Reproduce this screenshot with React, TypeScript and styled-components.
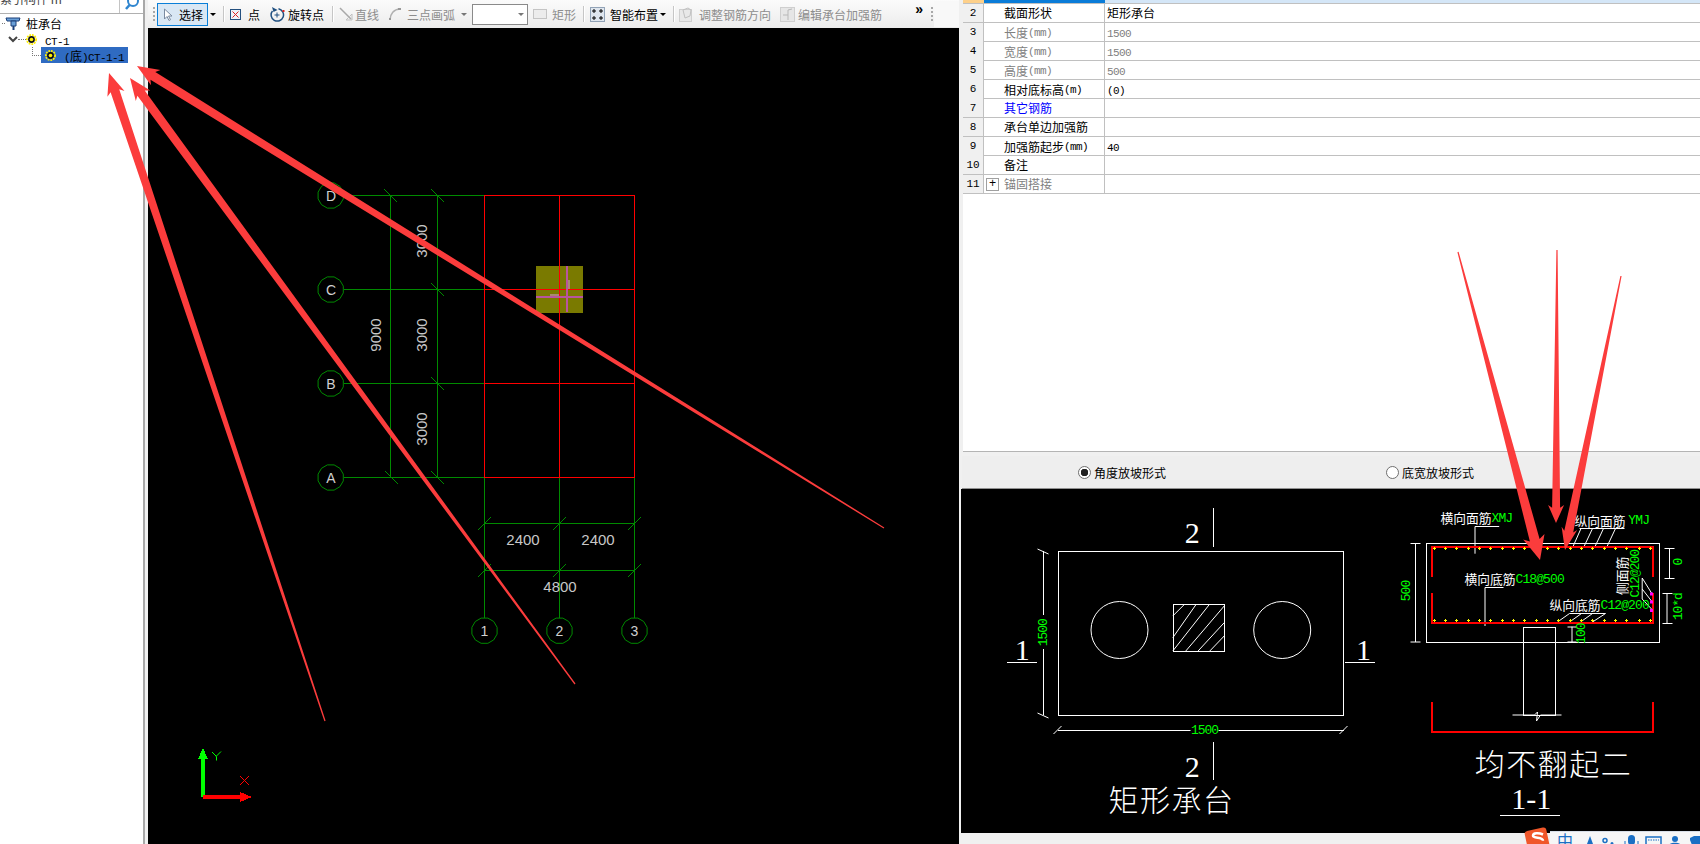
import React from "react";
import styled, { createGlobalStyle } from "styled-components";

const CJK = `"Noto Sans CJK SC", "Liberation Sans", sans-serif`;
const MONO = `"Liberation Mono", "Noto Sans CJK SC", monospace`;
const SERIF = `"Liberation Serif", "Noto Sans CJK SC", serif`;

const Global = createGlobalStyle`
  html, body { margin: 0; padding: 0; background: #f0f0f0; }
  body { font-family: ${CJK}; font-size: 12px; color: #000; }
`;

const Page = styled.div`
  position: relative;
  display: flex;
  width: 1700px;
  height: 844px;
  overflow: hidden;
  background: #f0f0f0;
`;

/* ---------- left tree ---------- */
const TreePanel = styled.aside`
  width: 143px;
  flex: none;
  background: #fff;
  border-right: 2px solid #a8a8a8;
  display: flex;
  flex-direction: column;
`;
const SearchBar = styled.div`
  height: 13px;
  flex: none;
  display: flex;
  border-bottom: 1px solid #b0b0b0;
`;
const SearchField = styled.div`
  width: 119px;
  height: 13px;
  border-right: 1px solid #c4c4c4;
  display: flex;
  align-items: flex-end;
  overflow: hidden;
`;
const SearchText = styled.span`
  line-height: 16px;
  margin-bottom: 6px;
  color: #444;
  white-space: nowrap;
`;
const SearchIcon = styled.div`
  flex: 1;
  display: flex;
  justify-content: center;
  overflow: hidden;
`;
const Tree = styled.div`
  padding-top: 1px;
`;
const TreeRow = styled.div<{ $indent: number }>`
  height: 16px;
  display: flex;
  align-items: center;
  padding-left: ${(p) => p.$indent}px;
  white-space: nowrap;
`;
const Dots = styled.span<{ $w: number }>`
  width: ${(p) => p.$w}px;
  height: 0;
  border-top: 1px dotted #777;
  flex: none;
`;
const Elbow = styled.span`
  width: 8px;
  height: 8px;
  margin-top: -8px;
  border-left: 1px dotted #777;
  border-bottom: 1px dotted #777;
  flex: none;
`;
const Selected = styled.div`
  width: 87px;
  height: 16px;
  padding-left: 4px;
  box-sizing: border-box;
  background: #2f6bc2;
  display: flex;
  align-items: center;
  color: #000;
`;
const NodeLabel = styled.span<{ $ml: number }>`
  margin-left: ${(p) => p.$ml}px;
`;
const Latin = styled.span`
  font-family: ${MONO};
  font-size: 11px;
  letter-spacing: -0.6px;
`;

/* ---------- centre ---------- */
const CenterPane = styled.main`
  width: 811px;
  margin-left: 3px;
  flex: none;
  display: flex;
  flex-direction: column;
`;
const Toolbar = styled.div`
  height: 28px;
  flex: none;
  display: flex;
  align-items: center;
  background: linear-gradient(#fbfbfb, #ececec);
  white-space: nowrap;
`;
const Grip = styled.span<{ $ml: number }>`
  width: 2px;
  height: 14px;
  margin-left: ${(p) => p.$ml}px;
  flex: none;
  background: repeating-linear-gradient(#a8a8a8 0 2px, transparent 2px 4px);
`;
const ActiveTool = styled.div`
  width: 51px;
  height: 23px;
  box-sizing: border-box;
  margin-left: 2px;
  padding-left: 5px;
  border: 1px solid #0a7fd8;
  background: #d9e7f4;
  display: flex;
  align-items: center;
  gap: 6px;
  flex: none;
`;
const Tool = styled.div<{ $ml: number; $off?: boolean; $gap?: number }>`
  margin-left: ${(p) => p.$ml}px;
  display: flex;
  align-items: center;
  gap: ${(p) => p.$gap ?? 4}px;
  color: ${(p) => (p.$off ? "#8d8d8d" : "#000")};
  flex: none;
`;
const Sep = styled.span<{ $ml: number }>`
  width: 1px;
  height: 16px;
  margin-left: ${(p) => p.$ml}px;
  background: #c6c6c6;
  box-shadow: 1px 0 0 #fff;
  flex: none;
`;
const Caret = styled.span<{ $ml: number; $off?: boolean }>`
  margin-left: ${(p) => p.$ml}px;
  width: 0;
  height: 0;
  border: 3px solid transparent;
  border-top: 3px solid ${(p) => (p.$off ? "#777" : "#000")};
  border-bottom: 0;
  flex: none;
`;
const Combo = styled.div`
  width: 56px;
  height: 21px;
  box-sizing: border-box;
  margin-left: 5px;
  border: 1px solid #8a8a8a;
  background: #fff;
  display: flex;
  align-items: center;
  justify-content: flex-end;
  padding-right: 3px;
  flex: none;
`;
const Chevrons = styled.span`
  width: 8px;
  margin-left: 33px;
  margin-top: -10px;
  font: bold 14px/14px "Liberation Sans", sans-serif;
  flex: none;
`;
const ToolEnd = styled.span`
  margin-left: auto;
  width: 25px;
  height: 26px;
  background: #f8f8f8;
  flex: none;
`;
const Canvas = styled.div`
  flex: 1;
  background: #000;
  overflow: hidden;
`;
const CadSvg = styled.svg`
  display: block;
  width: 100%;
  height: 100%;
`;

/* ---------- right ---------- */
const RightPane = styled.section`
  flex: 1;
  margin-left: 3px;
  display: flex;
  flex-direction: column;
  min-width: 0;
`;
const TableArea = styled.div`
  height: 451px;
  flex: none;
  background: #fff;
  margin-left: 1px;
  border-bottom: 1px solid #b4b4b4;
  box-sizing: content-box;
`;
const HeadRow = styled.div`
  height: 3px;
  display: grid;
  grid-template-columns: 21px 121px 1fr;
  border-bottom: 1px solid #c0c0c0;
`;
const HeadCell = styled.div<{ $bg: string }>`
  background: ${(p) => p.$bg};
`;
const Row = styled.div`
  height: 18px;
  display: grid;
  grid-template-columns: 21px 121px 1fr;
  border-bottom: 1px solid #c0c0c0;
  line-height: 18px;
`;
const NumCell = styled.div`
  background: #f0f0f0;
  border-right: 1px solid #c0c0c0;
  font: 11px/18px ${MONO};
  text-align: center;
`;
const NameCell = styled.div<{ $tone: "normal" | "off" | "link" }>`
  display: flex;
  align-items: center;
  padding-left: 20px;
  border-right: 1px solid #c0c0c0;
  color: ${(p) =>
    p.$tone === "off" ? "#808080" : p.$tone === "link" ? "#0000ff" : "#000"};
  position: relative;
  white-space: nowrap;
`;
const ValueCell = styled.div<{ $off?: boolean }>`
  padding-left: 2px;
  color: ${(p) => (p.$off ? "#808080" : "#000")};
`;
const PlusBox = styled.span`
  position: absolute;
  left: 2px;
  top: 3px;
  width: 11px;
  height: 11px;
  border: 1px solid #a0a0a0;
  font: 12px/10px ${MONO};
  text-align: center;
  color: #000;
`;
const OptionsBar = styled.div`
  height: 32px;
  margin-top: 4px;
  flex: none;
  background: #eeeeee;
  border-bottom: 1px solid #909090;
  display: flex;
  align-items: center;
`;
const RadioItem = styled.label<{ $ml: number }>`
  margin-left: ${(p) => p.$ml}px;
  display: flex;
  align-items: center;
  gap: 3px;
  white-space: nowrap;
`;
const RadioDot = styled.span<{ $on?: boolean }>`
  width: 11px;
  height: 11px;
  border-radius: 50%;
  border: 1px solid #707070;
  background: radial-gradient(circle, ${(p) => (p.$on ? "#222 0 3.5px" : "#fff 0 3.5px")}, #fff 4px);
`;
const DrawingArea = styled.div`
  height: 344px;
  flex: none;
  background: #000;
  margin-left: -1px;
  overflow: hidden;
`;
const StatusStrip = styled.div`
  flex: 1;
  background: #f0f0f0;
`;

/* ---------- overlays ---------- */
const ArrowLayer = styled.svg`
  position: absolute;
  left: 0;
  top: 0;
  width: 1700px;
  height: 844px;
  pointer-events: none;
`;
const ImeBar = styled.svg`
  position: absolute;
  right: 0;
  bottom: 0;
  width: 176px;
  height: 17px;
`;

/* ---------- CAD texts ---------- */
const GridMark = styled.text`
  font: 14px "Liberation Sans", sans-serif;
  fill: #d0d0d0;
  text-anchor: middle;
  dominant-baseline: central;
`;
const DimText = styled.text`
  font: 15px "Liberation Sans", sans-serif;
  fill: #c8c8c8;
  text-anchor: middle;
  dominant-baseline: central;
`;
const GreenDim = styled.text`
  font: 13px ${MONO};
  letter-spacing: -1px;
  fill: #00ff00;
  text-anchor: middle;
  dominant-baseline: central;
`;
const SerifMark = styled.text`
  font: 30px ${SERIF};
  fill: #fff;
  text-anchor: middle;
  dominant-baseline: central;
`;
const TitleText = styled.text`
  font: 300 30px ${CJK};
  letter-spacing: 1.5px;
  fill: #fff;
  text-anchor: middle;
  dominant-baseline: central;
`;
const RebarLabel = styled.text`
  font: 12.75px ${CJK};
  fill: #fff;
  dominant-baseline: central;
`;
const RebarCode = styled.tspan`
  font: 13px ${MONO};
  letter-spacing: -0.9px;
  fill: #00ff00;
`;

/* ---------- drawing helpers ---------- */
const ngon = (cx: number, cy: number, r: number, n = 12) =>
  Array.from({ length: n }, (_, i) => {
    const a = (i / n) * Math.PI * 2 + Math.PI / n;
    return `${(cx + r * Math.cos(a)).toFixed(1)},${(cy + r * Math.sin(a)).toFixed(1)}`;
  }).join(" ");

type Pt = [number, number];
const arrow = (tail: Pt, tip: Pt, w: number, hw: number, hl: number) => {
  const dx = tip[0] - tail[0];
  const dy = tip[1] - tail[1];
  const len = Math.hypot(dx, dy);
  const ux = dx / len;
  const uy = dy / len;
  const nx = -uy;
  const ny = ux;
  const at = (back: number, side: number): string =>
    `${(tip[0] - ux * back + nx * side).toFixed(1)},${(tip[1] - uy * back + ny * side).toFixed(1)}`;
  return [
    at(len, -0.6),
    at(len, 0.6),
    at(hl * 0.85, w / 2),
    at(hl, hw),
    at(0, 0),
    at(hl, -hw),
    at(hl * 0.85, -w / 2),
  ].join(" ");
};

const ARROWS: { tail: Pt; tip: Pt; w: number; hw: number; hl: number }[] = [
  { tail: [325, 721], tip: [109, 73], w: 9, hw: 9, hl: 22 },
  { tail: [575, 684], tip: [130, 78], w: 9, hw: 9, hl: 22 },
  { tail: [884, 528], tip: [137, 66], w: 9, hw: 9, hl: 22 },
  { tail: [1458, 252], tip: [1540, 560], w: 10, hw: 11, hl: 24 },
  { tail: [1557, 250], tip: [1556, 523], w: 8, hw: 8, hl: 18 },
  { tail: [1621, 276], tip: [1565, 550], w: 9, hw: 8, hl: 22 },
];

const GREEN = "#008a00";
const RED = "#ff0000";

const Gear = () => (
  <svg width="11" height="11" viewBox="0 0 11 11">
    <circle cx="5.5" cy="5.5" r="4.6" fill="none" stroke="#ffee00" strokeWidth="1.8" strokeDasharray="1.8 .9" />
    <circle cx="5.5" cy="5.5" r="3.4" fill="#111" />
    <circle cx="5.5" cy="5.5" r="1.8" fill="#ffee00" />
  </svg>
);

const rows: {
  n: number;
  name: string;
  unit?: string;
  value?: string;
  tone?: "normal" | "off" | "link";
  mono?: boolean;
  plus?: boolean;
}[] = [
  { n: 2, name: "截面形状", value: "矩形承台" },
  { n: 3, name: "长度", unit: "(mm)", value: "1500", tone: "off", mono: true },
  { n: 4, name: "宽度", unit: "(mm)", value: "1500", tone: "off", mono: true },
  { n: 5, name: "高度", unit: "(mm)", value: "500", tone: "off", mono: true },
  { n: 6, name: "相对底标高", unit: "(m)", value: "(0)", mono: true },
  { n: 7, name: "其它钢筋", tone: "link" },
  { n: 8, name: "承台单边加强筋" },
  { n: 9, name: "加强筋起步", unit: "(mm)", value: "40", mono: true },
  { n: 10, name: "备注" },
  { n: 11, name: "锚固搭接", tone: "off", plus: true },
];

const gridRows = [
  { y: 195.5, label: "D" },
  { y: 289.5, label: "C" },
  { y: 383.5, label: "B" },
  { y: 477.5, label: "A" },
];
const gridCols = [
  { x: 484.5, label: "1" },
  { x: 559.5, label: "2" },
  { x: 634.5, label: "3" },
];

const MainDrawing = () => (
  <CadSvg viewBox="148 28 811 816">
    <g shapeRendering="crispEdges" fill="none" strokeWidth="1">
      {gridRows.map((r) => (
        <React.Fragment key={r.label}>
          <line x1="344" y1={r.y} x2="484" y2={r.y} stroke={GREEN} />
          <line x1="484" y1={r.y} x2="635" y2={r.y} stroke={RED} />
        </React.Fragment>
      ))}
      <line x1="390.5" y1="195" x2="390.5" y2="478" stroke={GREEN} />
      <line x1="437.5" y1="195" x2="437.5" y2="478" stroke={GREEN} />
      {gridCols.map((c) => (
        <React.Fragment key={c.label}>
          <line x1={c.x} y1="195" x2={c.x} y2="478" stroke={RED} />
          <line x1={c.x} y1="478" x2={c.x} y2="618" stroke={GREEN} />
        </React.Fragment>
      ))}
      <line x1="484" y1="523.5" x2="635" y2="523.5" stroke={GREEN} />
      <line x1="484" y1="570.5" x2="635" y2="570.5" stroke={GREEN} />
    </g>
    <g stroke={GREEN} strokeWidth="1" fill="none">
      {[195.5, 289.5, 383.5, 477.5].map((y) => (
        <line key={`t${y}`} x1="431" y1={y - 6.5} x2="444" y2={y + 6.5} />
      ))}
      <line x1="384" y1="189" x2="397" y2="202" />
      <line x1="385" y1="471" x2="398" y2="484" />
      {[484.5, 559.5, 634.5].map((x) => (
        <React.Fragment key={`u${x}`}>
          <line x1={x - 6.5} y1="530" x2={x + 6.5} y2="517" />
          <line x1={x - 6.5} y1="577" x2={x + 6.5} y2="564" />
        </React.Fragment>
      ))}
      {gridRows.map((r) => (
        <polygon key={r.label} points={ngon(330.7, r.y, 13)} />
      ))}
      {gridCols.map((c) => (
        <polygon key={c.label} points={ngon(c.x, 630.7, 13)} />
      ))}
    </g>
    {gridRows.map((r) => (
      <GridMark key={r.label} x="331" y={r.y}>{r.label}</GridMark>
    ))}
    {gridCols.map((c) => (
      <GridMark key={c.label} x={c.x} y="631">{c.label}</GridMark>
    ))}
    {[241, 335, 429].map((y) => (
      <DimText key={y} x="421.5" y={y} transform={`rotate(-90 421.5 ${y})`}>3000</DimText>
    ))}
    <DimText x="375" y="335" transform="rotate(-90 375 335)">9000</DimText>
    <DimText x="523" y="539">2400</DimText>
    <DimText x="598" y="539">2400</DimText>
    <DimText x="560" y="586">4800</DimText>

    <rect x="536" y="266" width="47" height="47" fill="#7a7a00" />
    <line x1="536" y1="289.5" x2="583" y2="289.5" stroke={RED} shapeRendering="crispEdges" />
    <line x1="559.5" y1="266" x2="559.5" y2="313" stroke={RED} shapeRendering="crispEdges" />
    <rect x="566" y="266" width="2" height="46" fill="#b8559f" />
    <rect x="536" y="296" width="47" height="2" fill="#b8559f" />
    <rect x="550" y="294" width="9" height="2" fill="#a88a70" />
    <rect x="568" y="280" width="2" height="9" fill="#a88a70" />

    <g shapeRendering="crispEdges">
      <rect x="201" y="758" width="4" height="39" fill="#00ff00" />
      <polygon points="203,748 208,759 198,759" fill="#00ff00" />
      <rect x="203" y="795" width="37" height="4" fill="#ff0000" />
      <polygon points="252,797 240,792 240,802" fill="#ff0000" />
    </g>
    <path d="M212 752l4.500 4.500v4M221 751.500l-5 5" stroke="#00ff00" fill="none" />
    <path d="M240 776l9 9M249 776l-9 9" stroke="#ff0000" fill="none" />
  </CadSvg>
);

const topBars = [1435, 1446, 1457, 1469, 1480, 1491, 1503, 1514, 1525, 1537, 1548, 1559, 1571, 1582, 1593, 1605, 1616, 1627, 1640, 1651];

const SectionDrawing = () => (
  <CadSvg viewBox="962 488 738 344">
    <g stroke="#fff" strokeWidth="1" fill="none" shapeRendering="crispEdges">
      <rect x="1058.5" y="550.5" width="285" height="164" />
      <rect x="1173.5" y="603.500" width="51" height="47" />
      <line x1="1213.5" y1="507" x2="1213.5" y2="546" />
      <line x1="1213.5" y1="741" x2="1213.500" y2="779" />
      <line x1="1007" y1="661.5" x2="1037" y2="661.5" />
      <line x1="1345" y1="661.5" x2="1375" y2="661.5" />
      <line x1="1043.5" y1="550" x2="1043.5" y2="714" />
      <line x1="1058" y1="729.5" x2="1344" y2="729.5" />
      <rect x="1426.5" y="542.5" width="233" height="99" />
      <rect x="1523.5" y="626.5" width="32" height="88" />
    </g>
    <g stroke="#fff" strokeWidth="1" fill="none">
      <circle cx="1120" cy="629" r="28.5" />
      <circle cx="1282.7" cy="629" r="28.5" />
      <path d="M1173.300 615L1185 603.300M1173.300 636.700L1196.700 603.300M1173.300 650L1210 603.300M1186 650.300L1224.700 605M1198.300 650.300L1224.700 621.700M1210 650.300L1224.700 635" />
      <path d="M1038 548l11 5M1038 712l11 5M1054 733l8-8M1340 733l8-8" />
      <path d="M1513 714H1535l3-3 -1 9 4-6H1562" />
      <path d="M1499.700 525.500H1475.500V552.700" />
      <path d="M1580 527.500H1625M1581.500 527.500L1573 546.700M1593 527.500L1584 546.700M1604 527.500L1595 546.700M1616 527.500L1607 546.700" />
      <path d="M1504 586.500H1485.500V625" />
      <path d="M1606 612.500H1570M1570 612.500L1558 621M1582 612.500L1570 621M1593 612.500L1581 621M1606 612.500L1593 621" />
      <path d="M1642.700 577V598L1652 608M1642.700 588L1652 600M1642.700 577L1652 592" />
      <path d="M1416 542.500V641M1411 542.500H1421M1411 641H1421" />
      <path d="M1670 547.500V577.500M1665 547.500H1675M1665 577.500H1675" />
      <path d="M1667.500 592.500V622.500M1663 592.500H1673M1663 622.500H1673" />
      <path d="M1572.500 625.700V641M1568 626H1577M1568 641H1577" />
    </g>
    <g stroke={RED} strokeWidth="2" fill="none" shapeRendering="crispEdges">
      <path d="M1432 576V546H1653V576" />
      <path d="M1432 592V622H1653V592" />
      <path d="M1432 701V731H1653V701" />
    </g>
    {topBars.map((x) => (
      <React.Fragment key={x}>
        <path d={`M${x - 1.5} 547.500h3M${x} 546v3M${x - 1.5} 619.500h3M${x} 618v3`} stroke="#ffff00" />
      </React.Fragment>
    ))}
    {[592.5, 600.5, 609].map((y) => (
      <rect key={y} x="1650.5" y={y - 1} width="3" height="3" fill="#ff00ff" />
    ))}

    <SerifMark x="1192.7" y="531">2</SerifMark>
    <SerifMark x="1192.7" y="765">2</SerifMark>
    <SerifMark x="1022.7" y="648">1</SerifMark>
    <SerifMark x="1364" y="648">1</SerifMark>
    <SerifMark x="1531.7" y="797">1-1</SerifMark>
    <line x1="1500" y1="814.5" x2="1560" y2="814.5" stroke="#fff" shapeRendering="crispEdges" />
    <TitleText x="1172" y="797">矩形承台</TitleText>
    <TitleText x="1554" y="761">均不翻起二</TitleText>

    <rect x="1037" y="614" width="13" height="34" fill="#000" />
    <GreenDim x="1044" y="631.7" transform="rotate(-90 1044 631.7)">1500</GreenDim>
    <rect x="1191" y="722" width="28" height="14" fill="#000" />
    <GreenDim x="1205" y="729">1500</GreenDim>

    <RebarLabel x="1441" y="516.500">横向面筋<RebarCode>XMJ</RebarCode></RebarLabel>
    <RebarLabel x="1575" y="519">纵向面筋 <RebarCode>YMJ</RebarCode></RebarLabel>
    <RebarLabel x="1465" y="577.500">横向底筋<RebarCode>C18@500</RebarCode></RebarLabel>
    <RebarLabel x="1550" y="603.500">纵向底筋<RebarCode>C12@200</RebarCode></RebarLabel>
    <RebarLabel x="1622" y="594" transform="rotate(-90 1622 594)">侧面筋</RebarLabel>
    <GreenDim x="1636" y="572.700" transform="rotate(-90 1636 572.700)">C12@200</GreenDim>
    <GreenDim x="1406.700" y="590" transform="rotate(-90 1406.700 590)">500</GreenDim>
    <GreenDim x="1679" y="561" transform="rotate(-90 1679 561)">0</GreenDim>
    <GreenDim x="1679" y="605.700" transform="rotate(-90 1679 605.700)">10*d</GreenDim>
    <GreenDim x="1581.700" y="632.700" transform="rotate(-90 1581.700 632.700)">100</GreenDim>
  </CadSvg>
);

export default function App() {
  return (
    <Page>
      <Global />
      <TreePanel>
        <SearchBar>
          <SearchField>
            <SearchText>索引构件 m</SearchText>
          </SearchField>
          <SearchIcon>
            <svg width="16" height="13" viewBox="0 0 16 13">
              <circle cx="9" cy="1" r="5" fill="none" stroke="#2f86d0" strokeWidth="2" />
              <line x1="5.500" y1="5" x2="2" y2="9" stroke="#2f86d0" strokeWidth="2.500" />
            </svg>
          </SearchIcon>
        </SearchBar>
        <Tree>
          <TreeRow $indent={2}>
            <Dots $w={3} />
            <svg width="16" height="15" viewBox="0 0 16 15">
              <path d="M1 2h14l-1 3H2z" fill="#6aa0d8" stroke="#1a3f78" />
              <path d="M6 5h5v5H6z" fill="#6aa0d8" stroke="#1a3f78" />
              <path d="M7.500 10h2v4h-2z" fill="#1a3f78" />
            </svg>
            <NodeLabel $ml={5}>桩承台</NodeLabel>
          </TreeRow>
          <TreeRow $indent={8}>
            <svg width="10" height="7" viewBox="0 0 10 7">
              <path d="M1 1l4 4 4-4" fill="none" stroke="#444" strokeWidth="2" />
            </svg>
            <Dots $w={8} />
            <Gear />
            <NodeLabel $ml={8}><Latin>CT-1</Latin></NodeLabel>
          </TreeRow>
          <TreeRow $indent={32}>
            <Elbow />
            <Selected>
              <Gear />
              <NodeLabel $ml={8}><Latin>(</Latin>底<Latin>)CT-1-1</Latin></NodeLabel>
            </Selected>
          </TreeRow>
        </Tree>
      </TreePanel>

      <CenterPane>
        <Toolbar>
          <Grip $ml={5} />
          <ActiveTool>
            <svg width="10" height="13" viewBox="0 0 10 13">
              <path d="M1.500 1v10l2.500-2.500 2 4 1.500-.8-2-3.700h3.500z" fill="#fff" stroke="#7a8aa0" />
            </svg>
            <span>选择</span>
          </ActiveTool>
          <Caret $ml={2} />
          <Sep $ml={7} />
          <Tool $ml={6} $gap={7}>
            <svg width="11" height="11" viewBox="0 0 11 11">
              <rect x=".5" y=".5" width="10" height="10" fill="#eef3fa" stroke="#24507f" />
              <path d="M2.500 2.500l6 6M8.500 2.500l-6 6" stroke="#d22" />
            </svg>
            <span>点</span>
          </Tool>
          <Tool $ml={9} $gap={3}>
            <svg width="16" height="16" viewBox="0 0 16 16">
              <path d="M3.500 5A6.200 6.200 0 1 0 9.500 2.800" fill="none" stroke="#1f4f80" strokeWidth="1.500" />
              <path d="M3 1l1.500 5 4-2z" fill="#1f4f80" />
              <path d="M5.500 9h5M8 6.500v5" stroke="#1f4f80" />
              <rect x="13.500" y="4" width="2" height="2" fill="#d22" />
            </svg>
            <span>旋转点</span>
          </Tool>
          <Sep $ml={8} />
          <Tool $ml={6} $off $gap={2}>
            <svg width="14" height="14" viewBox="0 0 14 14">
              <path d="M1 1l11 11" stroke="#a8a8a8" strokeWidth="1.500" />
              <path d="M13 7v6H7z" fill="none" stroke="#c0c0c0" />
            </svg>
            <span>直线</span>
          </Tool>
          <Tool $ml={9} $off $gap={5}>
            <svg width="14" height="14" viewBox="0 0 14 14">
              <path d="M2 13C2 7 6 2 12 2" fill="none" stroke="#b0b0b0" strokeWidth="1.500" />
              <rect x="1" y="11" width="2" height="2" fill="#999" />
              <rect x="10" y="1" width="3" height="2" fill="#999" />
            </svg>
            <span>三点画弧</span>
          </Tool>
          <Caret $ml={6} $off />
          <Combo><Caret $ml={0} $off /></Combo>
          <Tool $ml={5} $off $gap={5}>
            <svg width="14" height="12" viewBox="0 0 14 12">
              <rect x=".5" y="1.500" width="13" height="9" fill="#ececec" stroke="#c4c4c4" />
            </svg>
            <span>矩形</span>
          </Tool>
          <Sep $ml={7} />
          <Tool $ml={6} $gap={5}>
            <svg width="15" height="15" viewBox="0 0 15 15">
              <rect x=".5" y=".5" width="14" height="14" fill="#dfe6ee" stroke="#38597c" strokeDasharray="1 1" />
              <path d="M4 2v4M2 4h4M11 2v4M9 4h4M4 9v4M2 11h4M11 9v4M9 11h4" stroke="#000" />
            </svg>
            <span>智能布置</span>
          </Tool>
          <Caret $ml={2} />
          <Sep $ml={7} />
          <Tool $ml={5} $off $gap={5}>
            <svg width="15" height="15" viewBox="0 0 15 15">
              <rect x=".5" y="2.500" width="12" height="12" fill="#e8e8e8" stroke="#cfcfcf" />
              <path d="M4 3l5-2 3 2-1 6-5 2z" fill="none" stroke="#c0c0c0" />
            </svg>
            <span>调整钢筋方向</span>
          </Tool>
          <Tool $ml={9} $off $gap={3}>
            <svg width="15" height="15" viewBox="0 0 15 15">
              <rect x=".5" y=".5" width="14" height="14" fill="#e6e6e6" stroke="#cfcfcf" />
              <path d="M3 8h5M8 3v10M8 3l4-1" fill="none" stroke="#b8b8b8" />
            </svg>
            <span>编辑承台加强筋</span>
          </Tool>
          <Chevrons>»</Chevrons>
          <Grip $ml={8} />
          <ToolEnd />
        </Toolbar>
        <Canvas>
          <MainDrawing />
        </Canvas>
      </CenterPane>

      <RightPane>
        <TableArea>
          <HeadRow>
            <HeadCell $bg="#fdd08a" />
            <HeadCell $bg="#0a7cd8" />
            <HeadCell $bg="#d4e6f7" />
          </HeadRow>
          {rows.map((r) => (
            <Row key={r.n}>
              <NumCell>{r.n}</NumCell>
              <NameCell $tone={r.tone ?? "normal"}>
                {r.plus && <PlusBox>+</PlusBox>}
                {r.name}
                {r.unit && <Latin>{r.unit}</Latin>}
              </NameCell>
              <ValueCell $off={r.tone === "off"}>
                {r.mono ? <Latin>{r.value}</Latin> : r.value}
              </ValueCell>
            </Row>
          ))}
        </TableArea>
        <OptionsBar>
          <RadioItem $ml={116}>
            <RadioDot $on />
            角度放坡形式
          </RadioItem>
          <RadioItem $ml={220}>
            <RadioDot />
            底宽放坡形式
          </RadioItem>
        </OptionsBar>
        <DrawingArea>
          <SectionDrawing />
        </DrawingArea>
        <StatusStrip />
      </RightPane>

      <ArrowLayer viewBox="0 0 1700 844">
        {ARROWS.map((a, i) => (
          <polygon key={i} points={arrow(a.tail, a.tip, a.w, a.hw, a.hl)} fill="#fb3c3c" />
        ))}
      </ArrowLayer>

      <ImeBar viewBox="1524 827 176 17">
        <rect x="1550" y="831" width="150" height="13" fill="#f6f6f6" />
        <line x1="1550" y1="831.500" x2="1700" y2="831.500" stroke="#d8dfe8" />
        <rect x="1526" y="829" width="22" height="20" rx="3" fill="#f0572a" transform="rotate(-12 1537 839)" />
        <path d="M1543 834.500c-4-1.800-10-1.800-10 1.200s10 1 10 5" fill="none" stroke="#fff" strokeWidth="2.500" />
        <text x="1565" y="847" fontSize="16" fill="#1a6fc4" textAnchor="middle" fontFamily={CJK}>中</text>
        <path d="M1590 836l3 8h-6z" fill="#1a6fc4" />
        <circle cx="1605" cy="840.500" r="2" fill="none" stroke="#1a6fc4" strokeWidth="1.500" />
        <circle cx="1612" cy="843.500" r="1.500" fill="#1a6fc4" />
        <rect x="1628" y="835" width="7" height="10" rx="3.500" fill="#1a6fc4" />
        <path d="M1625 841v3M1638 841v3" stroke="#1a6fc4" />
        <rect x="1646" y="837" width="15" height="8" fill="none" stroke="#1a6fc4" strokeWidth="1.500" />
        <path d="M1648 840h11" stroke="#1a6fc4" strokeDasharray="1.500 1" />
        <circle cx="1675" cy="839" r="3" fill="#1a6fc4" />
        <path d="M1669 845c1-3 11-3 12 0z" fill="#1a6fc4" />
        <path d="M1690 838l4-2 6 0v9h-8l-2-5z" fill="#1a6fc4" />
      </ImeBar>
    </Page>
  );
}
